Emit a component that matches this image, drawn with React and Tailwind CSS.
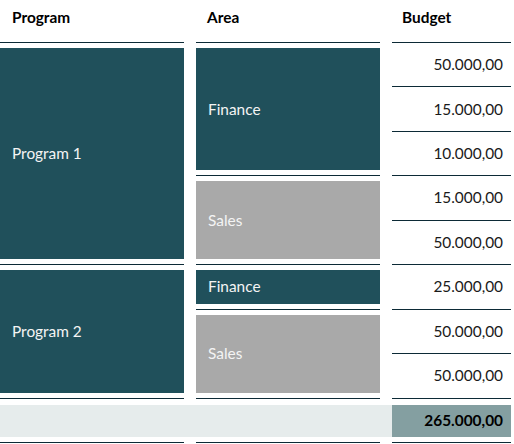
import React from "react";

const line = "border-t border-[#0c2a36]";

const Block = ({ tone, children }) => (
  <div
    className={`h-full flex items-center pl-[12px] text-[#f4f4f4] ${
      tone === "teal" ? "bg-[#20505b]" : "bg-[#a9a9a9]"
    }`}
  >
    {children}
  </div>
);

const budgets = [
  { v: "50.000,00", row: "row-start-2" },
  { v: "15.000,00", row: "row-start-3" },
  { v: "10.000,00", row: "row-start-4" },
  { v: "15.000,00", row: "row-start-5" },
  { v: "50.000,00", row: "row-start-6" },
  { v: "25.000,00", row: "row-start-7" },
  { v: "50.000,00", row: "row-start-8" },
  { v: "50.000,00", row: "row-start-9" },
];

export default function App() {
  return (
    <div
      className="w-[514px] h-[444px] bg-white text-[15.4px] overflow-hidden"
      style={{ fontFamily: "Lato, 'Open Sans', sans-serif" }}
    >
      <div className="grid grid-cols-[184px_184px_119px] gap-x-3 grid-rows-[42px_repeat(8,44.45px)_45px]">
        {/* header */}
        <div className="col-start-1 row-start-1 flex items-center pb-[6px] pl-[12px] font-bold text-black">
          Program
        </div>
        <div className="col-start-2 row-start-1 flex items-center pb-[6px] pl-[11px] font-bold text-black">
          Area
        </div>
        <div className="col-start-3 row-start-1 flex items-center pb-[6px] pl-[10px] font-bold text-black">
          Budget
        </div>

        {/* program column */}
        <div className={`col-start-1 row-start-2 row-span-5 py-[5px] ${line}`}>
          <Block tone="teal">Program 1</Block>
        </div>
        <div className={`col-start-1 row-start-7 row-span-3 py-[5px] ${line}`}>
          <Block tone="teal">Program 2</Block>
        </div>

        {/* area column */}
        <div className={`col-start-2 row-start-2 row-span-3 py-[5px] ${line}`}>
          <Block tone="teal">Finance</Block>
        </div>
        <div className={`col-start-2 row-start-5 row-span-2 py-[5px] ${line}`}>
          <Block tone="gray">Sales</Block>
        </div>
        <div className={`col-start-2 row-start-7 py-[5px] ${line}`}>
          <Block tone="teal">Finance</Block>
        </div>
        <div className={`col-start-2 row-start-8 row-span-2 py-[5px] ${line}`}>
          <Block tone="gray">Sales</Block>
        </div>

        {/* budget column */}
        {budgets.map((b, i) => (
          <div
            key={i}
            className={`col-start-3 ${b.row} flex items-center justify-end pr-[8px] text-[#1a1a1a] ${line}`}
          >
            {b.v}
          </div>
        ))}

        {/* total row */}
        <div className={`col-start-1 row-start-10 ${line} border-b`} />
        <div className={`col-start-2 row-start-10 ${line} border-b`} />
        <div className={`col-start-3 row-start-10 ${line} border-b`} />
        <div className="col-start-1 col-span-3 row-start-10 pt-[7px] pb-[6px] flex">
          <div className="w-[392px] bg-[#e6ecec]" />
          <div className="w-[119px] bg-[#849fa1] flex items-center justify-end pr-[8px] font-bold text-black">
            265.000,00
          </div>
        </div>
      </div>
    </div>
  );
}
